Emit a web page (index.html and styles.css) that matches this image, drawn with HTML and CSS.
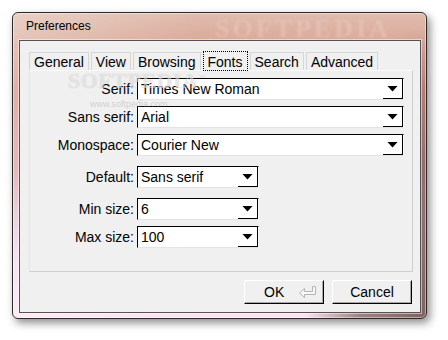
FILE: index.html
```html
<!DOCTYPE html>
<html lang="en">
<head>
    <meta charset="UTF-8">
    <title>Preferences</title>
    <link rel="stylesheet" href="styles.css">
</head>
<body>
    <div class="janela">
        <div class="titulo">
            Preferences
            <span class="marca-titulo">SOFTPEDIA</span>
        </div>
        <div class="cliente">
            <div class="abas">
                <div class="aba">General</div>
                <div class="aba">View</div>
                <div class="aba">Browsing</div>
                <div class="aba ativa">Fonts</div>
                <div class="aba">Search</div>
                <div class="aba">Advanced</div>
            </div>
            <div class="painel">
                <div class="linha">
                    <span class="rotulo">Serif:</span>
                    <div class="combo largo"><span class="valor">Times New Roman</span><span class="seta"></span></div>
                </div>
                <div class="linha g6">
                    <span class="rotulo">Sans serif:</span>
                    <div class="combo largo"><span class="valor">Arial</span><span class="seta"></span></div>
                </div>
                <div class="linha g6">
                    <span class="rotulo">Monospace:</span>
                    <div class="combo largo"><span class="valor">Courier New</span><span class="seta"></span></div>
                </div>
                <div class="linha g10">
                    <span class="rotulo">Default:</span>
                    <div class="combo curto"><span class="valor">Sans serif</span><span class="seta"></span></div>
                </div>
                <div class="linha g10">
                    <span class="rotulo">Min size:</span>
                    <div class="combo curto"><span class="valor">6</span><span class="seta"></span></div>
                </div>
                <div class="linha g6">
                    <span class="rotulo">Max size:</span>
                    <div class="combo curto"><span class="valor">100</span><span class="seta"></span></div>
                </div>
            </div>
            <div class="botoes">
                <button class="botao ok">OK
                    <svg width="18" height="13" viewBox="0 0 18 13"><path d="M0.5 7 L5.5 2.5 L5.5 5.5 L13.5 5.5 L13.5 0.5 L16.5 0.5 L16.5 8.5 L5.5 8.5 L5.5 11.5 Z" fill="#f8f8f8" stroke="#b4b4b4"/></svg>
                </button>
                <button class="botao">Cancel</button>
            </div>
            <div class="marca">SOFTPEDIA<sup>™</sup></div>
            <div class="marca-url">www.softpedia.com</div>
        </div>
    </div>
</body>
</html>
```
FILE: styles.css
```css
* {
    margin: 0;
    padding: 0;
    box-sizing: border-box;
}

body {
    width: 448px;
    height: 340px;
    overflow: hidden;
    background: #fff;
    font-family: "Liberation Sans", Arial, sans-serif;
    color: #000;
}

.janela {
    margin: 12px 0 0 12px;
    width: 415px;
    height: 307px;
    border: 1px solid #2e2828;
    border-radius: 6px;
    padding: 0 5px 5px 6px;
    background:
        radial-gradient(ellipse 120px 290px at 100% 100%, rgba(120, 92, 88, 0.95) 0, rgba(128, 96, 92, 0.75) 55%, rgba(128, 96, 92, 0) 100%),
        linear-gradient(to right, rgba(255, 255, 255, 0.3), rgba(255, 255, 255, 0) 45%),
        linear-gradient(to bottom, #e0bcae 0, #d9a999 30px, #d48c7e 80px, #d99ca2 160px, #e8c4d8 210px, #f7dbec 255px, #fbe1f1 100%);
    box-shadow: inset 0 0 0 1px rgba(255, 255, 255, 0.45), 3px 4px 8px rgba(0, 0, 0, 0.45);
}

.titulo {
    position: relative;
    height: 27px;
    line-height: 27px;
    padding-left: 7px;
    font-size: 12px;
    overflow: hidden;
}

.marca-titulo {
    position: absolute;
    left: 196px;
    top: 3px;
    font-family: "Liberation Serif", serif;
    font-weight: bold;
    font-size: 26px;
    line-height: 26px;
    letter-spacing: 3px;
    color: rgba(236, 200, 190, 0.55);
    filter: blur(1px);
}

.cliente {
    position: relative;
    width: 402px;
    height: 273px;
    border: 1px solid #5a5252;
    background: #f0f0f0;
    padding: 10px 7px 8px 9px;
    display: flex;
    flex-direction: column;
    box-shadow: 0 0 0 1px rgba(255, 255, 255, 0.5);
}

.abas {
    display: flex;
    align-items: flex-end;
    gap: 2px;
}

.aba {
    font-size: 14px;
    line-height: 16px;
    padding: 1px 4px 0;
    border: 1px solid #d6d6d6;
    border-bottom: 0;
    background: #f0f0f0;
}

.aba.ativa {
    position: relative;
    z-index: 1;
    padding-top: 2px;
    border: 1px dotted #000;
    margin-bottom: -1px;
}

.painel {
    height: 202px;
    border: 1px solid #cfcfcf;
    border-top-color: #fbfbfb;
    border-left-color: #e4e4e4;
    padding-top: 7px;
}

.linha {
    display: flex;
    align-items: center;
    height: 22px;
}

.linha.g6 {
    margin-top: 6px;
}

.linha.g10 {
    margin-top: 10px;
}

.rotulo {
    width: 104px;
    margin-right: 3px;
    text-align: right;
    font-size: 14px;
}

.combo {
    display: flex;
    height: 22px;
    border-top: 1px solid #000;
    border-left: 1px solid #000;
    border-bottom: 1px solid #e4e4e4;
    border-right: 1px solid #fafafa;
    background: #fff;
}

.combo.largo {
    width: 267px;
}

.combo.curto {
    width: 122px;
}

.valor {
    flex: 1;
    padding-left: 3px;
    font-size: 14px;
    line-height: 20px;
}

.seta {
    width: 20px;
    border-right: 1px solid #000;
    border-bottom: 1px solid #000;
    display: flex;
    align-items: center;
    justify-content: center;
}

.seta::before {
    content: "";
    width: 11px;
    height: 6px;
    background: #000;
    clip-path: polygon(0 0, 100% 0, 50% 100%);
}

.botoes {
    display: flex;
    justify-content: flex-end;
    gap: 8px;
    margin-top: 8px;
    margin-right: 1px;
}

.botao {
    width: 80px;
    height: 24px;
    font-family: "Liberation Sans", Arial, sans-serif;
    font-size: 14px;
    line-height: 16px;
    background: #f0f0f0;
    color: #000;
    border: 1px solid;
    border-color: #fff #000 #000 #fff;
    box-shadow: inset -1px -1px 0 #a8a8a8;
}

.botao.ok {
    display: flex;
    align-items: center;
    padding-left: 19px;
    gap: 15px;
}

.marca {
    position: absolute;
    left: 48px;
    top: 26px;
    font-family: "Liberation Serif", serif;
    font-weight: bold;
    font-size: 22px;
    line-height: 22px;
    letter-spacing: 0.5px;
    color: rgba(255, 255, 255, 0.55);
    text-shadow: 0 0 1px rgba(0, 0, 0, 0.2);
    pointer-events: none;
}

.marca sup {
    font-size: 7px;
    font-family: "Liberation Sans", sans-serif;
    font-weight: normal;
}

.marca-url {
    position: absolute;
    left: 70px;
    top: 58px;
    font-size: 9px;
    color: rgba(140, 140, 140, 0.35);
    pointer-events: none;
}
```
